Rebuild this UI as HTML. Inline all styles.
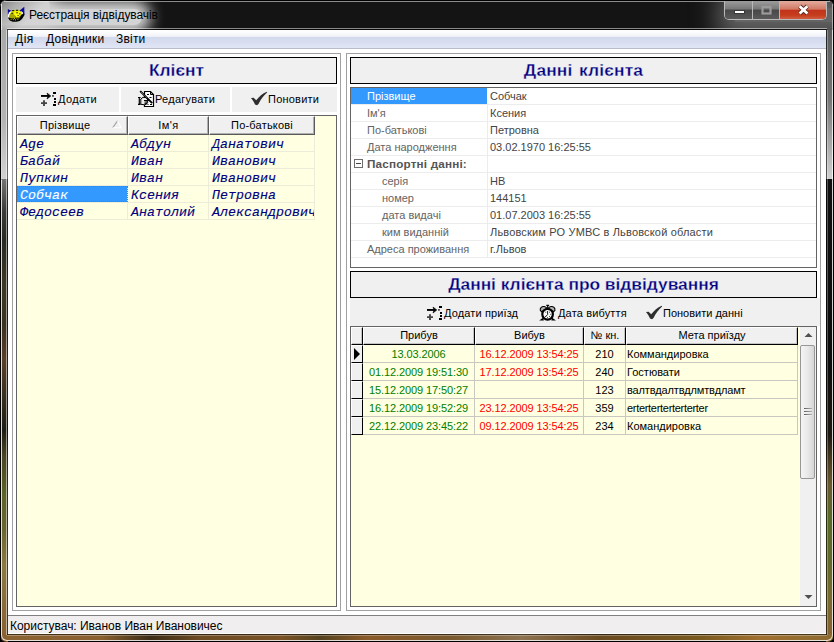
<!DOCTYPE html>
<html lang="uk">
<head>
<meta charset="utf-8">
<title>Реєстрація відвідувачів</title>
<style>
*{box-sizing:border-box;margin:0;padding:0}
html,body{width:834px;height:642px;overflow:hidden}
body{position:relative;background:#000;font-family:"Liberation Sans",sans-serif;font-size:11px;color:#000}
.abs{position:absolute}
#frame{position:absolute;left:0;top:0;width:834px;height:642px;background:#000;border-radius:7px;overflow:hidden}
#fl{position:absolute;left:1px;top:0;width:7px;height:642px;background:linear-gradient(180deg,#8c8c8c 0,#a8a8a8 30px,#b4b4b4 120px,#d2d2d2 179px,#747472 179px,#3a3a36 212px,#2a2a24 240px,#3c3826 285px,#3a3222 325px,#5a4028 360px,#3a3020 395px,#1e1c14 430px,#4a4424 455px,#5e6428 495px,#6a6630 530px,#8a7a40 565px,#8a6a38 610px,#8a6030 642px)}
#fr{position:absolute;left:826px;top:0;width:7px;height:642px;background:linear-gradient(180deg,#555 0,#5c5c5c 30px,#777 100px,#d0d0d0 179px,#111 179px,#0e0e0e 370px,#1a1410 400px,#1e1812 435px,#4a3c20 460px,#6a5a30 485px,#5a6a28 520px,#62692a 560px,#7a6a30 600px,#8a6030 642px)}
#fb{position:absolute;left:1px;top:634px;width:832px;height:7px;background:linear-gradient(90deg,#8a6232 0,#8a6030 100px,#3c2c18 150px,#6e4c24 200px,#7a5226 280px,#55431f 320px,#8a5a2a 365px,#7a5a30 450px,#8c7250 520px,#6a4a20 600px,#7a5a20 700px,#a07030 760px,#8a6a30 834px)}
.ln{position:absolute}
#titlebar{position:absolute;left:0;top:0;width:834px;height:30px;background:#141414;overflow:hidden;border-radius:7px 7px 0 0}
#tglow{position:absolute;left:-14px;top:9px;width:156px;height:16px;background:#d4d4d4;box-shadow:0 0 14px 9px #d4d4d4;border-radius:8px}
#tglow2{position:absolute;left:-20px;top:-2px;width:70px;height:26px;background:#c6c6c6;box-shadow:0 0 16px 6px #c6c6c6;border-radius:8px}
#tsh{position:absolute;left:0;top:0;width:120px;height:30px;background:linear-gradient(135deg,rgba(60,60,60,.55) 0,rgba(60,60,60,.25) 14px,rgba(60,60,60,0) 34px)}
#bglow{position:absolute;left:735px;top:8px;width:130px;height:14px;background:#646464;box-shadow:0 0 26px 17px #646464}
#cap{position:absolute;left:724px;top:1px;width:103px;height:19px;border:1px solid #b9b9b9;border-top:0;border-radius:0 0 5px 5px;overflow:hidden;background:#444}
#cap div{position:absolute;top:0;height:18px}
.cmin{left:0;width:28px;background:linear-gradient(180deg,#9c9c9c 0,#787878 45%,#484848 50%,#5a5a5a 100%);border-right:1px solid #b9b9b9}
.cmax{left:28px;width:27px;background:linear-gradient(180deg,#9c9c9c 0,#787878 45%,#484848 50%,#5a5a5a 100%);border-right:1px solid #b9b9b9}
.ccl{left:55px;width:47px;background:linear-gradient(180deg,#e3ab9d 0,#d27a66 45%,#c2341a 52%,#c63e1e 80%,#d05c42 100%)}
#title{position:absolute;left:29px;top:8px;font-size:12px;color:#000;white-space:nowrap;letter-spacing:-0.07px}
#client{position:absolute;left:8px;top:30px;width:818px;height:604px;background:#fff}
#menubar{position:absolute;left:0;top:0;width:818px;height:19px;background:linear-gradient(180deg,#ffffff 0,#f8f9fc 4px,#eceff7 7px,#d2d9ec 7px,#d8deef 12px,#e1e6f6 18px);border-bottom:1px solid #babbcb;font-size:12px}
#menubar span{position:absolute;top:2px}
.panel{position:absolute;border:1px solid #a0a0a0;background:#fff}
.tbox{position:absolute;border:1px solid #000;background:#f0f0f0;color:#000080;font-size:17.4px;text-align:center;font-weight:bold;-webkit-text-stroke:0.3px #f0f0f0}
.btn{position:absolute;background:#f0f0f0;height:25px;line-height:25px;white-space:nowrap}
.grid{position:absolute;border:1px solid #646464;background:#ffffe1;overflow:hidden}
.hd{position:absolute;background:#f0f0f0;border-top:1px solid #fff;border-left:1px solid #fff;border-right:1px solid #5a5a5a;border-bottom:1px solid #5a5a5a;box-shadow:inset -1px -1px 0 #b0b0b0;text-align:center;line-height:16px;height:19px}
#g2 .hd{border-right-color:#000;border-bottom-color:#000;box-shadow:inset -1px -1px 0 #c4c4c4}
.mono{font-family:"Liberation Mono",monospace;font-size:13.33px;font-style:italic;color:#000080;white-space:pre;-webkit-text-stroke:0.12px #000080}
#status{position:absolute;left:0;top:585px;width:818px;height:18px;background:#f0eeee;border-top:1px solid #808080;font-size:12px;padding:3px 0 0 2px;letter-spacing:-0.02px}

.row{position:absolute;left:0;width:298px;height:17px;border-bottom:1px solid #ececd8}
.row span{position:absolute;top:0;height:16px;line-height:19px;overflow:hidden;padding-left:3px}
.c1{left:0;width:111px}
.c2{left:111px;width:81px}
.c3{left:192px;width:106px}
.row span.c1,.row span.c2,.row span.c3{border-right:1px solid #ececd8}
.row span.sel{background:#3399ff;color:#fff;-webkit-text-stroke-color:#fff;outline:1px dotted #cc6600;outline-offset:-1px}

.pgrid{position:absolute;border:1px solid #646464;background:#fff;overflow:hidden;color:#646464}
.prow{position:absolute;left:0;width:465px;height:17px;border-bottom:1px solid #ececec;line-height:16px;white-space:nowrap}
.pl{position:absolute;left:0;top:0;width:137px;height:16px;border-right:1px solid #ececec}
.pv{position:absolute;left:139px;top:0;color:#444}
.prow.sel .pl{background:#3399ff;color:#fff;width:136px;border-right:0}
.prow.cat .pl{font-weight:bold;color:#555;font-size:11.7px;letter-spacing:.18px}
.pm{position:absolute;left:3px;top:3px;width:9px;height:9px;border:1px solid #6d6d6d;background:#fff;z-index:2}
.pm:after{content:"";position:absolute;left:1px;top:3px;width:5px;height:1px;background:#444}

.r2{position:absolute;left:0;width:447px;height:18px;line-height:18px;white-space:nowrap}
.r2 span{position:absolute;top:0;height:18px;border-right:1px solid #c8c8c0;border-bottom:1px solid #c8c8c0;overflow:hidden}
.r2 .ind{left:0;width:12px;background:#f0f0f0;border-top:1px solid #fff;border-left:1px solid #fff;border-right:1px solid #000;border-bottom:1px solid #000}
.r2 .d1{left:12px;width:112px;text-align:center;color:#008000;letter-spacing:-0.1px}
.r2 .d2{left:124px;width:109px;text-align:center;color:#ff0000;letter-spacing:-0.1px}
.r2 .d3{left:233px;width:42px;text-align:center}
.r2 .d4{left:275px;width:172px;padding-left:1px}
.cur{position:absolute;left:2px;top:2px;width:0;height:0;border-left:6px solid #000;border-top:6px solid transparent;border-bottom:6px solid transparent}
.sb{position:absolute;background:#f0f0f0}
.sbt{position:absolute;left:0;width:15px;border:1px solid #979797;border-radius:2px;background:linear-gradient(90deg,#f4f4f4 0,#e9e9e9 50%,#d6d6d6 100%)}
.sbt i{position:absolute;left:3px;top:62px;width:8px;height:9px;background:repeating-linear-gradient(180deg,#5a5a5a 0,#5a5a5a 1px,#f4f4f4 1px,#f4f4f4 2px,transparent 2px,transparent 3px);-webkit-mask-image:linear-gradient(90deg,#000 0,rgba(0,0,0,.35) 100%)}
</style>
</head>
<body>
<div id="frame">
 <div id="fl"></div><div id="fr"></div><div id="fb"></div>
 <div class="ln" style="left:1px;top:30px;width:1px;height:150px;background:rgba(255,255,255,.28)"></div>
 <div class="ln" style="left:1px;top:180px;width:832px;height:461px;border:1px solid rgba(255,255,255,.8);border-top:0;border-radius:0 0 6px 6px"></div>
 <div class="ln" style="left:6px;top:30px;width:1px;height:605px;background:rgba(255,255,255,.5)"></div>
 <div class="ln" style="left:7px;top:29px;width:1px;height:606px;background:rgba(0,0,0,.5)"></div>
 <div class="ln" style="left:826px;top:29px;width:1px;height:606px;background:rgba(0,0,0,.6)"></div>
 <div class="ln" style="left:827px;top:30px;width:1px;height:605px;background:rgba(255,255,255,.3)"></div>
 <div class="ln" style="left:832px;top:20px;width:1px;height:160px;background:rgba(255,255,255,.8)"></div>
 <div class="ln" style="left:7px;top:634px;width:820px;height:1px;background:rgba(0,0,0,.5)"></div>
 <div class="ln" style="left:7px;top:635px;width:820px;height:1px;background:rgba(255,255,255,.3)"></div>
</div>
<div id="titlebar"><div id="tglow2"></div><div id="tglow"></div><div id="tsh"></div><div id="bglow"></div>
 <div class="ln" style="left:0;top:0;width:834px;height:1px;background:#000"></div>
 <div class="ln" style="left:4px;top:1px;width:826px;height:1px;background:rgba(255,255,255,.5)"></div>
 <div class="ln" style="left:7px;top:28px;width:820px;height:1px;background:rgba(255,255,255,.5)"></div>
 <div class="ln" style="left:7px;top:29px;width:820px;height:1px;background:rgba(0,0,0,.7)"></div>
 <div class="ln" style="left:1px;top:4px;width:1px;height:26px;background:rgba(255,255,255,.7)"></div>
 <div class="ln" style="left:0;top:3px;width:1px;height:27px;background:#000"></div>
 <div class="ln" style="left:832px;top:4px;width:1px;height:26px;background:rgba(255,255,255,.5)"></div>
 <div class="ln" style="left:833px;top:3px;width:1px;height:27px;background:#000"></div>
 <div id="cap"><div class="cmin"></div><div class="cmax"></div><div class="ccl"></div>
  <svg class="abs" style="left:0;top:0" width="103" height="20" viewBox="0 0 103 20">
   <rect x="9.500" y="9.500" width="10" height="3" fill="#fff" stroke="#3a3a3a" stroke-width="1"/>
   <rect x="37.500" y="6" width="8" height="6.500" fill="none" stroke="#9a9a9a" stroke-width="2.200"/>
   <path d="M74.600 5.200L82.400 12.600M82.400 5.200L74.600 12.600" stroke="#5a2418" stroke-width="4.400" fill="none"/>
   <path d="M74.600 5.200L82.400 12.600M82.400 5.200L74.600 12.600" stroke="#fff" stroke-width="2.800" fill="none"/>
  </svg>
 </div>
</div>
<svg class="abs" style="left:7px;top:6px" width="18" height="17" viewBox="7 6 18 17">
 <path d="M7.800 9l3.400 1.800-1.400 4-2 .2z" fill="#0a0a96"/>
 <path d="M24.300 6.800l.1 8.200-2.400.4-2.600-4.600z" fill="#0a0a96"/>
 <path d="M9.300 12.200l1.400-1.200.6 2.800-1.600 3.600-1.800-.2.200-2.800z" fill="#fff"/>
 <path d="M21 11l1.800 1.200.2 3-1.400.6z" fill="#fff"/>
 <path d="M9 18c-.4-3.600 2-7.800 6.400-8.300 3.800-.4 6.600 1.900 7.200 5.700l-2.400 3.800-7.600 1.200z" fill="#f4f400"/>
 <path d="M8.800 18.200c0-2 .8-4 2.400-5.400l4.800 3.200 1.800 4.200-6 .6z" fill="#a6a600"/>
 <path d="M7.800 17.500l4.800.9 5.800-1.300 3.600-2.900 2.400-.6-.2 2-2.200 3.400-2.400 2-3.400.8h-3.400l-3-1.300z" fill="#000"/>
 <path d="M14.400 13.600l3.800.2 3 2.200-2 1.600-2.600-.4z" fill="#ffff10"/>
 <path d="M11.800 10.700h2.600M15.800 10.300h2.400M11.400 13.200h2M16.400 12.800h1.400M19.200 13.800h1.200M17.600 15.600h1M19.600 16.400h1" stroke="#000" stroke-width="1" fill="none"/>
 <path d="M10.600 19.300h1M12.800 19.700h1M15 19.900h1M17.400 19.200h1M16.200 18h1M18.400 17.800h1M14 18.600h1" stroke="#d8d800" stroke-width="1" fill="none"/>
</svg>
<div id="title">Реєстрація відвідувачів</div>
<div id="client">
 <div id="menubar"><span style="left:7px;letter-spacing:.5px">Дія</span><span style="left:38px;letter-spacing:.25px">Довідники</span><span style="left:108px;letter-spacing:.2px">Звіти</span></div>
 <div id="status">Користувач: Иванов Иван Ивановичес</div>
</div>

<!-- LEFT PANEL -->
<div class="panel" style="left:12px;top:53px;width:329px;height:558px"></div>
<div class="tbox" style="left:16px;top:57px;width:321px;height:27px;line-height:25px">Клієнт</div>
<div class="btn" style="left:16px;top:87px;width:103px"><span class="abs" style="left:42px;letter-spacing:.35px">Додати</span></div>
<div class="btn" style="left:121px;top:87px;width:109px"><span class="abs" style="left:34px;letter-spacing:.25px">Редагувати</span></div>
<div class="btn" style="left:232px;top:87px;width:105px"><span class="abs" style="left:36px;letter-spacing:.22px">Поновити</span></div>
<div class="grid" id="g1" style="left:16px;top:115px;width:321px;height:492px">
 <div class="hd" style="left:0;top:0;width:111px;padding-right:15px;letter-spacing:.25px">Прізвище</div>
 <div class="hd" style="left:111px;top:0;width:81px;letter-spacing:.4px">Ім'я</div>
 <div class="hd" style="left:192px;top:0;width:106px;letter-spacing:.2px">По-батькові</div>
 <div class="row" style="top:19px"><span class="mono c1">Age</span><span class="mono c2">Абдун</span><span class="mono c3">Данатович</span></div>
 <div class="row" style="top:36px"><span class="mono c1">Бабай</span><span class="mono c2">Иван</span><span class="mono c3">Иванович</span></div>
 <div class="row" style="top:53px"><span class="mono c1">Пупкин</span><span class="mono c2">Иван</span><span class="mono c3">Иванович</span></div>
 <div class="row" style="top:70px"><span class="mono c1 sel">Собчак</span><span class="mono c2">Ксения</span><span class="mono c3">Петровна</span></div>
 <div class="row" style="top:87px"><span class="mono c1">Федосеев</span><span class="mono c2">Анатолий</span><span class="mono c3">Александрович</span></div>
</div>

<!-- RIGHT PANEL -->
<div class="panel" style="left:346px;top:53px;width:475px;height:558px"></div>
<div class="tbox" style="left:350px;top:57px;width:467px;height:27px;line-height:25px;letter-spacing:0.15px;word-spacing:1.5px">Данні клієнта</div>
<div class="pgrid" style="left:350px;top:87px;width:467px;height:181px">
 <div class="prow sel" style="top:0px"><span class="pl" style="padding-left:16px">Прізвище</span><span class="pv">Собчак</span></div>
 <div class="prow " style="top:17px"><span class="pl" style="padding-left:16px">Ім'я</span><span class="pv">Ксения</span></div>
 <div class="prow " style="top:34px"><span class="pl" style="padding-left:16px">По-батькові</span><span class="pv">Петровна</span></div>
 <div class="prow " style="top:51px"><span class="pl" style="padding-left:16px">Дата народження</span><span class="pv">03.02.1970 16:25:55</span></div>
 <div class="prow cat" style="top:68px"><i class="pm"></i><span class="pl" style="padding-left:16px">Паспортні данні:</span><span class="pv"></span></div>
 <div class="prow " style="top:85px"><span class="pl" style="padding-left:31px">серія</span><span class="pv">НВ</span></div>
 <div class="prow " style="top:102px"><span class="pl" style="padding-left:31px">номер</span><span class="pv">144151</span></div>
 <div class="prow " style="top:119px"><span class="pl" style="padding-left:31px">дата видачі</span><span class="pv">01.07.2003 16:25:55</span></div>
 <div class="prow " style="top:136px"><span class="pl" style="padding-left:31px">ким виданній</span><span class="pv" style="letter-spacing:.17px">Львовским РО УМВС в Львовской области</span></div>
 <div class="prow " style="top:153px"><span class="pl" style="padding-left:16px">Адреса проживання</span><span class="pv">г.Львов</span></div>
</div>
<div class="tbox" style="left:350px;top:271px;width:467px;height:27px;line-height:25px;letter-spacing:-0.03px">Данні клієнта про відвідування</div>
<div class="btn" style="left:350px;top:298px;width:470px;height:28px;line-height:31px">
 <span class="abs" style="left:94px;letter-spacing:.13px">Додати приїзд</span>
 <span class="abs" style="left:208px;letter-spacing:.15px">Дата вибуття</span>
 <span class="abs" style="left:313px">Поновити данні</span>
</div>
<div class="grid" id="g2" style="left:350px;top:326px;width:467px;height:281px">
 <div class="hd" style="left:0;top:0;width:12px;height:18px"></div>
 <div class="hd" style="left:12px;top:0;width:112px;height:18px;line-height:15px">Прибув</div>
 <div class="hd" style="left:124px;top:0;width:109px;height:18px;line-height:15px">Вибув</div>
 <div class="hd" style="left:233px;top:0;width:42px;height:18px;line-height:15px">№ кн.</div>
 <div class="hd" style="left:275px;top:0;width:172px;height:18px;line-height:15px">Мета приїзду</div>
 <div class="r2" style="top:18px"><span class="ind"><i class="cur"></i></span><span class="d1">13.03.2006</span><span class="d2">16.12.2009 13:54:25</span><span class="d3">210</span><span class="d4">Коммандировка</span></div>
 <div class="r2" style="top:36px"><span class="ind"></span><span class="d1">01.12.2009 19:51:30</span><span class="d2">17.12.2009 13:54:25</span><span class="d3">240</span><span class="d4">Гостювати</span></div>
 <div class="r2" style="top:54px"><span class="ind"></span><span class="d1">15.12.2009 17:50:27</span><span class="d2"></span><span class="d3">123</span><span class="d4" style="letter-spacing:-0.15px">валтвдалтвдлмтвдламт</span></div>
 <div class="r2" style="top:72px"><span class="ind"></span><span class="d1">16.12.2009 19:52:29</span><span class="d2">23.12.2009 13:54:25</span><span class="d3">359</span><span class="d4" style="letter-spacing:-0.3px">erterterterterterter</span></div>
 <div class="r2" style="top:90px"><span class="ind"></span><span class="d1">22.12.2009 23:45:22</span><span class="d2">09.12.2009 13:54:25</span><span class="d3">234</span><span class="d4">Командировка</span></div>
<div class="sb" style="left:449px;top:0;width:16px;height:279px">
 <div class="sbt" style="top:18px;height:134px"><i></i></div>
 <svg class="abs" style="left:4px;top:5px" width="9" height="6" viewBox="0 0 9 6"><path d="M0.5 5 L4.5 1 L8.5 5 Z" fill="#505050"/></svg>
 <svg class="abs" style="left:4px;top:267px" width="9" height="6" viewBox="0 0 9 6"><path d="M0.5 1 L4.5 5 L8.5 1 Z" fill="#505050"/></svg>
</div>
</div>

<!-- ICONS -->
<svg class="abs" style="left:41px;top:92px" width="16" height="15" viewBox="0 0 16 15">
 <path d="M0 3h8v1.900H0z" fill="#000"/><path d="M6 1L9.800 4L6 7L7 4z" fill="#000" stroke="#000" stroke-width=".6"/>
 <path d="M0 10.200h6v1.900H0z M2.050 8.300h1.900v5.600h-1.900z" fill="#444"/>
 <path d="M12 0h3v1.900h-3z M12 12h3v1.900h-3z" fill="#000"/>
 <path d="M11 3h1.900v1.800H11z" fill="#555"/><path d="M13 6h2v1.900h-2z M13 9h2v1.900h-2z" fill="#000"/>
</svg>
<svg class="abs" style="left:137px;top:90px" width="18" height="18" viewBox="137 90 18 18">
 <path d="M144.500 91.500h6l3 3v12h-9z" fill="#fff" stroke="#000" stroke-width="1.200"/>
 <path d="M150.500 91.500v3h3" fill="none" stroke="#000" stroke-width="1"/>
 <path d="M147 94.500h2M149.500 97.500h2M150 104.500h2M147.500 104.500h1" stroke="#000" stroke-width="1.200"/>
 <path d="M138 97.500h2.600M139.300 97.500v6.800M138 104.300h2.600" stroke="#000" stroke-width="1.200" fill="none"/>
 <path d="M140.800 99L143 97.300l3 .3 1.600 1.600-.6 4.600-2.200 1-4-.5z" fill="#ececec" stroke="#000" stroke-width="1"/>
 <path d="M144 100.500h5M144.500 102h3.800M144.500 103.400h2.600" stroke="#000" stroke-width="1"/>
 <path d="M140.200 91.200L152.200 103.200" stroke="#000" stroke-width="1.900"/>
 <path d="M141.300 92.300L147 98" stroke="#fff" stroke-width="0.700" stroke-dasharray="0.800 0.800"/>
</svg>
<svg class="abs" style="left:251px;top:91px" width="17" height="15" viewBox="0 0 17 15">
 <path d="M0 7L2.600 6.700L5.200 9.200C8 5.500 11.500 2.600 15.800 0.700L16.100 1.500C12.600 4.600 9.600 8.600 7.500 13.100L6 14.300L4 13.500C3 11 1.600 8.800 0 7z" fill="#2e2e2e"/>
</svg>
<svg class="abs" style="left:427px;top:306px" width="16" height="15" viewBox="0 0 16 15">
 <path d="M0 3h8v1.900H0z" fill="#000"/><path d="M6 1L9.800 4L6 7L7 4z" fill="#000" stroke="#000" stroke-width=".6"/>
 <path d="M0 10.200h6v1.900H0z M2.050 8.300h1.900v5.600h-1.900z" fill="#444"/>
 <path d="M12 0h3v1.900h-3z M12 12h3v1.900h-3z" fill="#000"/>
 <path d="M11 3h1.900v1.800H11z" fill="#555"/><path d="M13 6h2v1.900h-2z M13 9h2v1.900h-2z" fill="#000"/>
</svg>
<svg class="abs" style="left:539px;top:304px" width="18" height="17" viewBox="539 304 18 17">
 <path d="M540.300 310.500c-.5-2.500 1.500-4.300 4-4 1.200.2 2 .8 2.400 1.600l-5 3.600z" fill="#b0b0b0" stroke="#000" stroke-width="1.100"/>
 <path d="M554.900 310.500c.5-2.500-1.500-4.300-4-4-1.200.2-2 .8-2.400 1.600l5 3.600z" fill="#b0b0b0" stroke="#000" stroke-width="1.100"/>
 <path d="M546.300 305.300h2.800M547.700 305.300v4" stroke="#000" stroke-width="1.200"/>
 <circle cx="547.600" cy="314.300" r="5.300" fill="#fff" stroke="#000" stroke-width="2.200"/>
 <path d="M547.600 311v3.600l-2.200 2.200" stroke="#000" stroke-width="0.900" fill="none"/>
 <path d="M545.400 312.200h.8M549.200 312.200h.8M550.300 314.300h.9M549.200 316.400h.8M545.400 316.400h.8M547.200 317.600h.8" stroke="#000" stroke-width="0.900"/>
 <path d="M543.300 318.300l-2.300 1.600h2.800M551.900 318.300l2.300 1.600h-2.800" stroke="#000" stroke-width="1.100" fill="none"/>
</svg>
<svg class="abs" style="left:646px;top:305px" width="17" height="15" viewBox="0 0 17 15">
 <path d="M0 7L2.600 6.700L5.200 9.200C8 5.500 11.500 2.600 15.800 0.700L16.100 1.500C12.600 4.600 9.600 8.600 7.500 13.100L6 14.300L4 13.500C3 11 1.600 8.800 0 7z" fill="#2e2e2e"/>
</svg>
<svg class="abs" style="left:112px;top:120px" width="10" height="9" viewBox="0 0 10 9">
 <path d="M0.700 7.800L5.600 0.800" stroke="#9a9a9a" stroke-width="1.100" fill="none"/>
 <path d="M5.600 0.800L9 7.800H0.700" stroke="#fff" stroke-width="1.100" fill="none"/>
</svg>
</body>
</html>
